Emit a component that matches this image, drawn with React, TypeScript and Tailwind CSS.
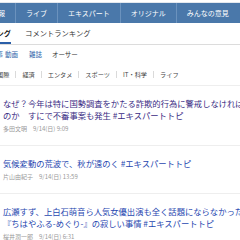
const navItems = ["速報", "ライブ", "エキスパート", "オリジナル", "みんなの意見"];
const categories = ["国際", "経済", "エンタメ", "スポーツ", "IT・科学", "ライフ"];

const articles = [
  {
    lines: [
      "なぜ？今年は特に国勢調査をかたる詐欺的行為に警戒しなければならない",
      "のか　すにで不審事案も発生 #エキスパートトピ",
    ],
    meta: "多田文明　9/14(日) 9:09",
    visited: true,
  },
  {
    lines: ["気候変動の荒波で、秋が遠のく #エキスパートトピ"],
    meta: "片山由紀子　9/14(日) 13:59",
    visited: false,
  },
  {
    lines: [
      "広瀬すず、上白石萌音ら人気女優出演も全く話題にならなかった",
      "『ちはやふる-めぐり-』の寂しい事情 #エキスパートトピ",
    ],
    meta: "桜井潤一郎　9/14(日) 6:31",
    visited: false,
  },
];

export default function App() {
  return (
    <div
      className="w-[240px] h-[240px] overflow-hidden bg-white"
      style={{ fontFamily: '"Noto Sans CJK JP", "Noto Sans", sans-serif' }}
    >
      <div className="h-[3px] border-b border-[#e3e8ee] bg-white" />
      <nav className="flex h-[20px] items-center bg-[#4a78aa] text-[7px] text-white">
        {navItems.map((item, i) => (
          <div
            key={item}
            className={
              i === 0
                ? "ml-[-19px] flex h-full shrink-0 items-center px-[10px]"
                : "flex h-full shrink-0 items-center border-l border-[#6b92bd] px-[10px]"
            }
          >
            {item}
          </div>
        ))}
      </nav>

      <div className="flex h-[22px] items-end gap-[14px] border-b border-[#dcdcdc] text-[7.3px] text-[#333]">
        <div className="ml-[-54px] shrink-0 border-b-2 border-[#2b5fa8] pb-[3px] font-bold text-[#222]">
          アクセスランキング
        </div>
        <div className="shrink-0 pb-[5px]">コメントランキング</div>
      </div>

      <div className="flex h-[20px] items-center text-[6.5px]">
        <span className="ml-[-10px] mr-[2px] shrink-0 text-[#2b5fa8]">記事</span>
        <span className="mr-[11px] shrink-0 text-[#2b5fa8]">動画</span>
        <span className="mr-[10px] shrink-0 text-[#2b5fa8]">雑誌</span>
        <span className="shrink-0 text-[#333]">オーサー</span>
      </div>

      <div className="flex h-[20px] items-center text-[6.2px] text-[#444]">
        <div className="ml-[-3px] flex shrink-0 items-center">
          {categories.map((c, i) => (
            <div key={c} className="flex items-center">
              {i > 0 && <span className="mx-[6px] h-[7px] w-px bg-[#dadada]" />}
              <span className="shrink-0">{c}</span>
            </div>
          ))}
        </div>
      </div>

      <div className="flex flex-col">
        {articles.map((a) => (
          <div key={a.meta} className="border-t border-[#eeeeee] pl-[3px] pt-[11px] pb-[12px]">
            {a.lines.map((line) => (
              <p
                key={line}
                className={
                  a.visited
                    ? "whitespace-nowrap text-[8.3px] leading-[12px] text-[#3b2c84]"
                    : "whitespace-nowrap text-[8.3px] leading-[12px] text-[#1f47b0]"
                }
              >
                {line}
              </p>
            ))}
            <p className="mt-[3px] text-[6px] text-[#999]">{a.meta}</p>
          </div>
        ))}
      </div>
    </div>
  );
}
